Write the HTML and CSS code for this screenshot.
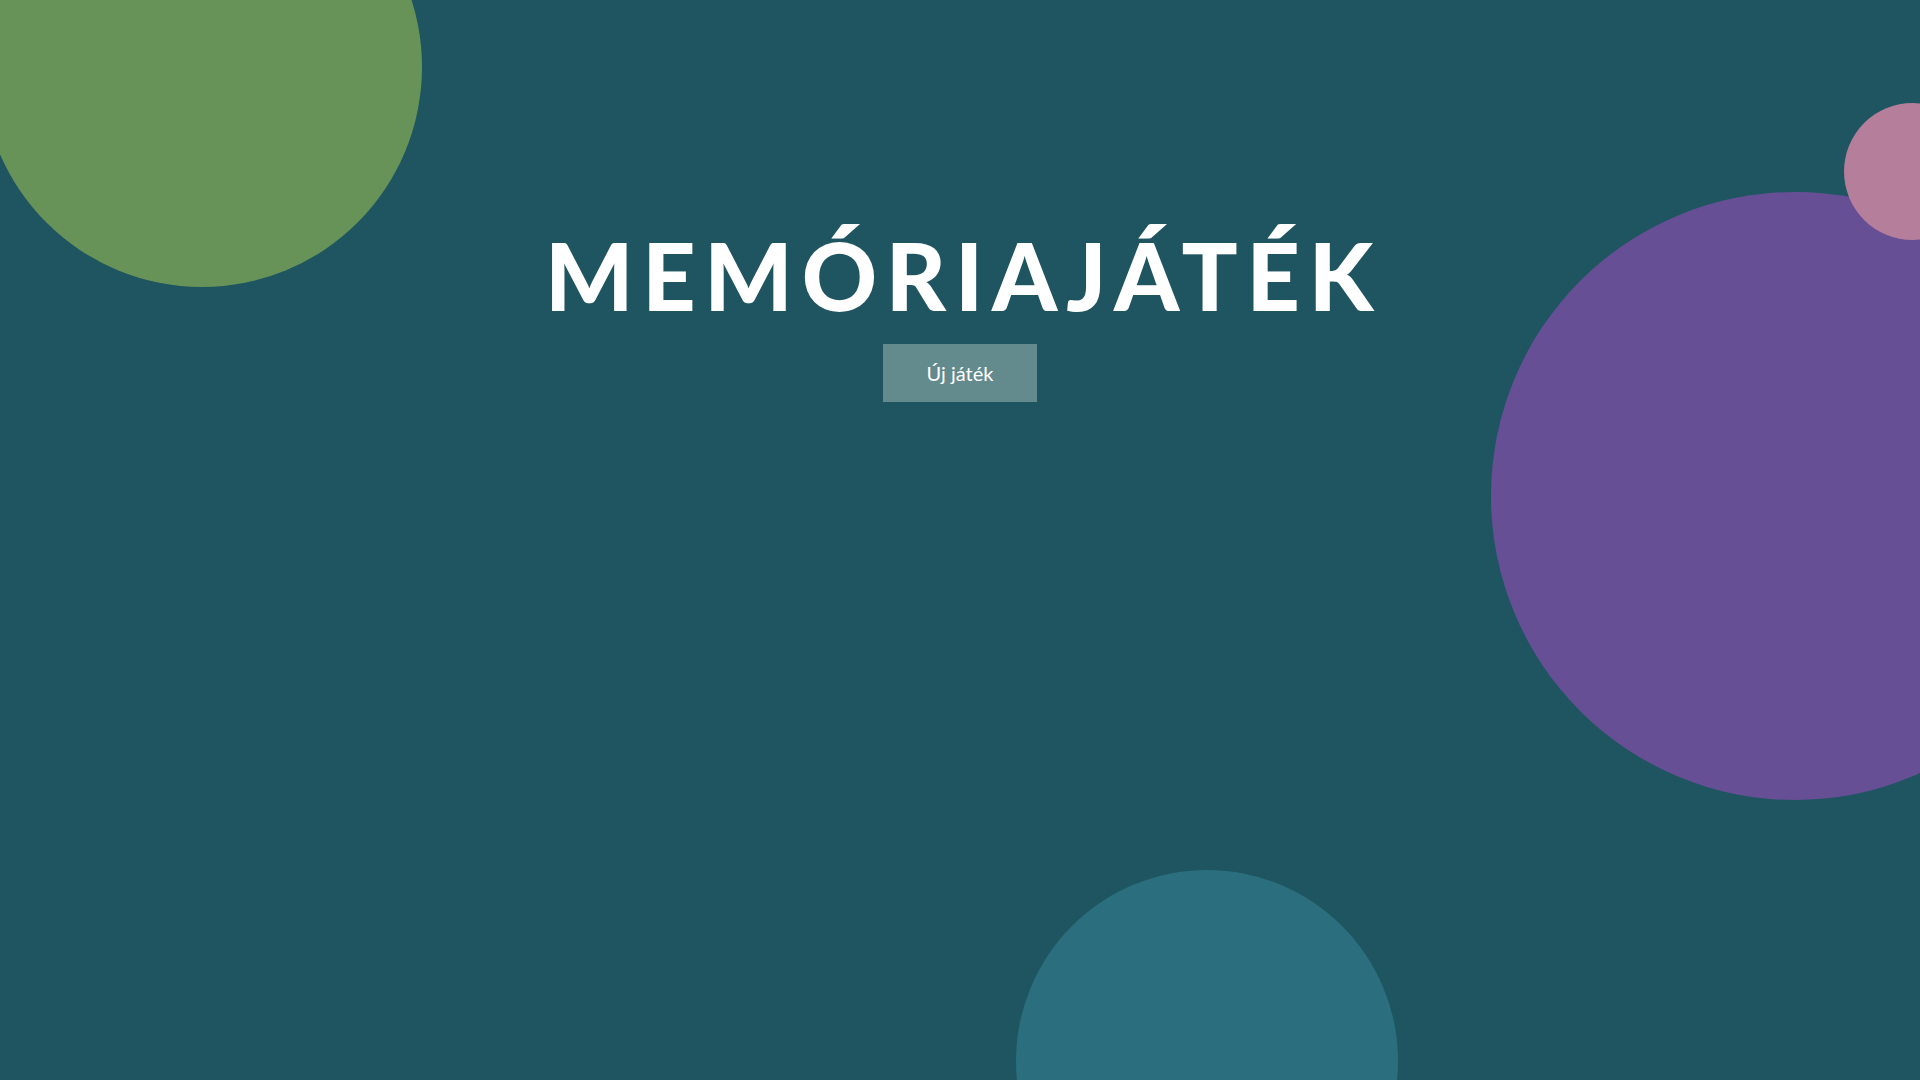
FILE: index.html
```html
<!DOCTYPE html>
<html lang="hu">
<head>
<meta charset="utf-8">
<title>Memóriajáték</title>
<link rel="stylesheet" href="styles.css">
</head>
<body>
<div class="bubble bubble-green"></div>
<div class="bubble bubble-purple"></div>
<div class="bubble bubble-pink"></div>
<div class="bubble bubble-teal"></div>
<main class="game">
  <h1 class="title">MEMÓRIAJÁTÉK</h1>
  <button class="new-game">Új játék</button>
</main>
</body>
</html>
```
FILE: styles.css
```css
html, body {
  margin: 0;
  padding: 0;
  width: 100%;
  height: 100%;
  overflow: hidden;
}
body {
  background: #1f5560;
  font-family: "Lato", "Open Sans", sans-serif;
  position: relative;
}
.bubble {
  position: absolute;
  border-radius: 50%;
}
.bubble-green {
  width: 440px; height: 440px;
  left: -18px; top: -153px;
  background: #679359;
}
.bubble-purple {
  width: 608px; height: 608px;
  left: 1491px; top: 192px;
  background: #674f96;
}
.bubble-pink {
  width: 137px; height: 137px;
  left: 1844px; top: 103px;
  background: #b57e9a;
}
.bubble-teal {
  width: 382px; height: 382px;
  left: 1016px; top: 870px;
  background: #2b6f7e;
}
.game {
  position: relative;
  z-index: 1;
  display: flex;
  flex-direction: column;
  align-items: center;
  padding-top: 205px;
}
.title {
  margin: 0;
  padding-left: 7px;
  color: #ffffff;
  font-family: "Lato", sans-serif;
  font-weight: 900;
  font-size: 93px;
  line-height: 140px;
  letter-spacing: 8.8px;
}
.new-game {
  margin-top: -1px;
  width: 154px;
  height: 58px;
  border: none;
  background: #638a8c;
  color: #ffffff;
  font-family: "Lato", sans-serif;
  font-size: 20px;
  cursor: pointer;
}
```
